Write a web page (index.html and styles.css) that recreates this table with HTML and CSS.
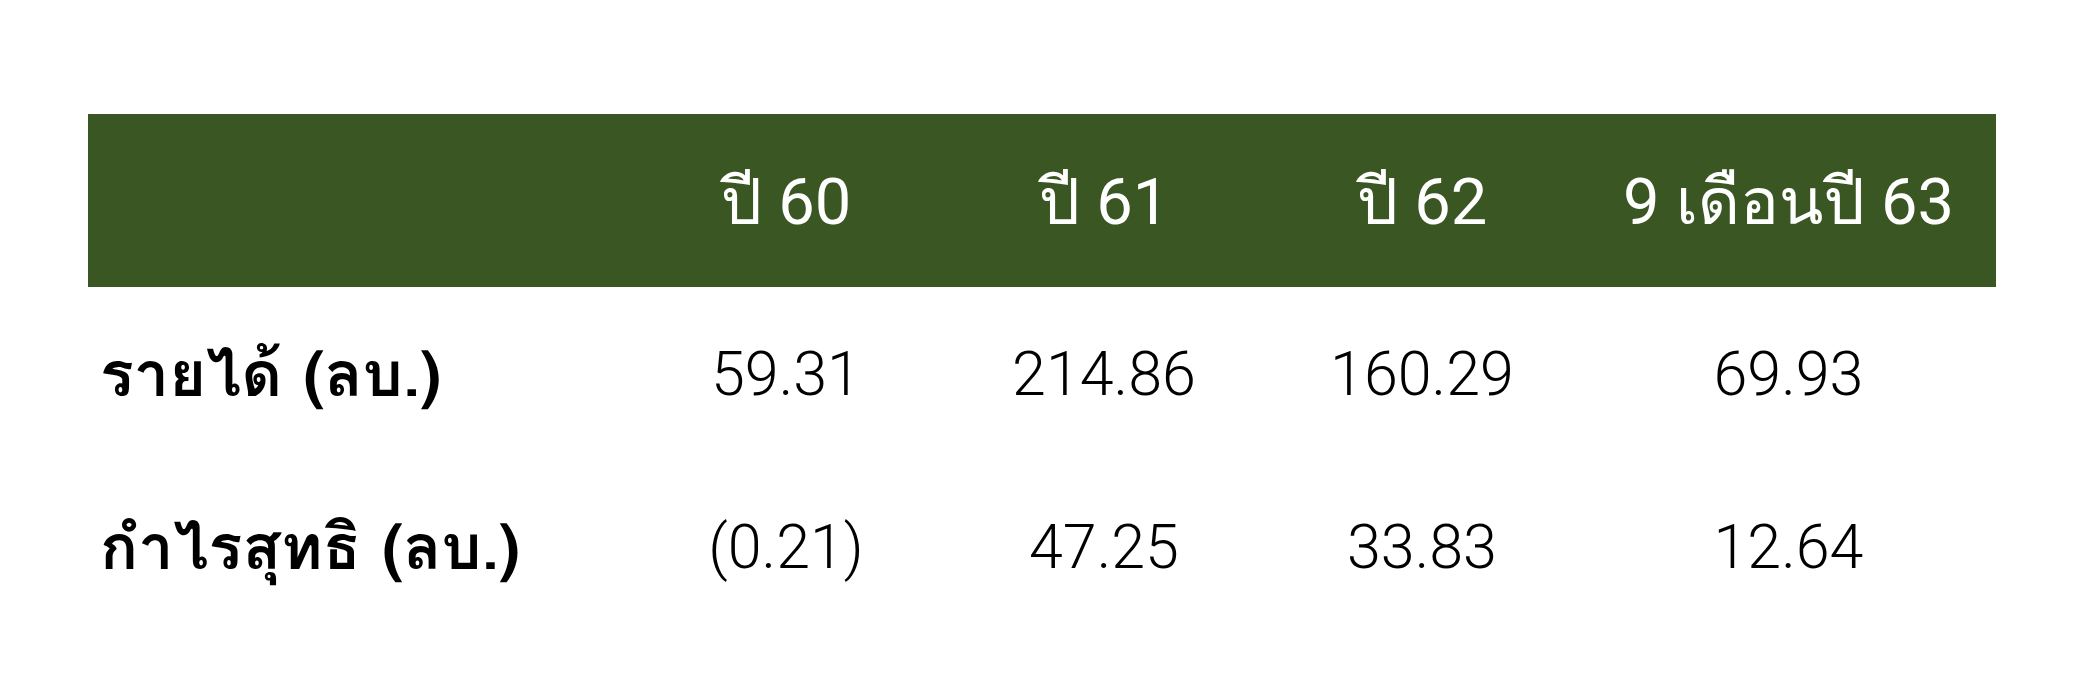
FILE: index.html
```html
<!DOCTYPE html>
<html lang="th">
<head>
<meta charset="utf-8">
<title>ผลประกอบการ</title>
<link rel="stylesheet" href="styles.css">
</head>
<body>
<div class="page">
  <div class="table">
    <div class="row head">
      <div class="cell label"></div>
      <div class="cell">ปี 60</div>
      <div class="cell">ปี 61</div>
      <div class="cell">ปี 62</div>
      <div class="cell">9 เดือนปี 63</div>
    </div>
    <div class="row">
      <div class="cell label">รายได้ (ลบ.)</div>
      <div class="cell">59.31</div>
      <div class="cell">214.86</div>
      <div class="cell">160.29</div>
      <div class="cell">69.93</div>
    </div>
    <div class="row">
      <div class="cell label">กำไรสุทธิ (ลบ.)</div>
      <div class="cell">(0.21)</div>
      <div class="cell">47.25</div>
      <div class="cell">33.83</div>
      <div class="cell">12.64</div>
    </div>
  </div>
</div>
</body>
</html>
```
FILE: styles.css
```css
html, body {
  margin: 0;
  padding: 0;
  background: #ffffff;
}
.page {
  width: 2085px;
  height: 687px;
  padding: 114px 0 0 88px;
  box-sizing: border-box;
}
.table {
  width: 1908px;
  font-family: "Roboto", "Loma", "Liberation Sans", sans-serif;
  font-weight: 300;
  font-size: 61px;
  color: #000;
}
.row {
  display: grid;
  grid-template-columns: 539px 318px 318px 318px 1fr;
  height: 173px;
  align-items: center;
}
.row.head {
  background: #3a5623;
  color: #ffffff;
  font-weight: 400;
  font-size: 65px;
}
.cell {
  text-align: center;
  white-space: nowrap;
}
.cell.label {
  text-align: left;
  padding-left: 12px;
  font-family: "Loma", "Liberation Sans", sans-serif;
  font-weight: bold;
  font-size: 63px;
}
```
